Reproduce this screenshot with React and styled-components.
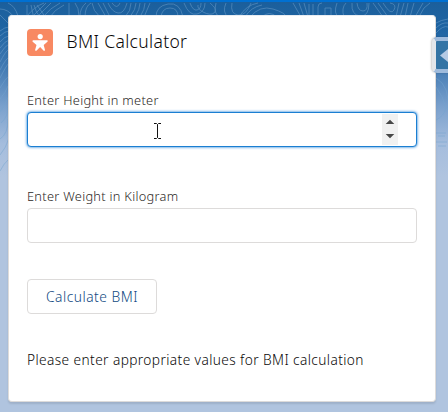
import React from "react";
import styled, { createGlobalStyle } from "styled-components";

const GlobalStyle = createGlobalStyle`
  *, *::before, *::after { box-sizing: border-box; }
  body {
    margin: 0;
    overflow: hidden;
    font-family: "Noto Sans", "Open Sans", sans-serif;
    font-weight: 300;
  }
`;

const Page = styled.main`
  position: relative;
  width: 448px;
  height: 412px;
  padding: 13px 12px 10px 8px;
  overflow: hidden;
  border-top: 2px solid #0070d2;
  background: linear-gradient(180deg, #1b5f9c 0, #2065a3 30px, #4079b2 64px, #7ba1cd 105px, #a5bddd 142px, #b0c4df 175px);
`;

const Contours = styled.svg`
  position: absolute;
  inset: 0;
  width: 448px;
  height: 190px;
  fill: none;
  stroke: #75a4cf;
  stroke-width: 0.8;
  opacity: 0.6;
`;

const Card = styled.article`
  position: relative;
  display: flex;
  flex-direction: column;
  align-items: flex-start;
  height: 387px;
  padding: 13px 19px 0 18px;
  background: #fff;
  border: 1px solid #dddbda;
  border-top-color: #e8edf3;
  border-radius: 4px;
  box-shadow: 0 2px 2px rgba(0, 0, 0, 0.1);
`;

const CardHeader = styled.header`
  display: flex;
  align-items: center;
  gap: 13.5px;
  height: 27px;
`;

const StandardIcon = styled.svg`
  display: block;
  width: 26px;
  height: 27px;
`;

const Title = styled.h2`
  margin: 0;
  padding-bottom: 2px;
  color: #080707;
  font-size: 17.5px;
  font-weight: 300;
  line-height: 25px;
  letter-spacing: 0.34px;
  white-space: nowrap;
`;

const Field = styled.div`
  width: 390px;
  margin-top: ${({ $gap }) => $gap}px;
`;

const Label = styled.label`
  display: block;
  height: 20px;
  color: #2b2826;
  font-size: 12.8px;
  line-height: 16px;
  letter-spacing: 0.29px;
  white-space: nowrap;
`;

const InputBox = styled.div`
  position: relative;
  display: flex;
  align-items: center;
  justify-content: flex-end;
  height: 35px;
  padding-right: 18px;
  background: #fff;
  border: 1px solid ${({ $focused }) => ($focused ? "#1b7fd2" : "#dddbda")};
  border-radius: 4px;
  box-shadow: ${({ $focused }) => ($focused ? "0 0 3px #0070d2" : "none")};
`;

const NumberInput = styled.input`
  flex: 1;
  min-width: 0;
  height: 31px;
  padding: 0 12px;
  border: 0;
  outline: 0;
  background: transparent;
  font: inherit;
  caret-color: transparent;
`;

const Spinner = styled.svg`
  display: block;
  width: 16px;
  height: 31px;
`;

const Pointer = styled.svg`
  position: absolute;
  left: 125px;
  top: 9px;
  width: 9px;
  height: 18px;
`;

const Button = styled.button`
  width: 130px;
  height: 35px;
  margin-top: 36px;
  padding: 0;
  color: #124a82;
  background: #fff;
  border: 1px solid #dddbda;
  border-radius: 4px;
  font-family: inherit;
  font-size: 13.8px;
  font-weight: 300;
  line-height: 32px;
  letter-spacing: 0.5px;
  white-space: nowrap;
`;

const Message = styled.p`
  margin: 36px 0 0;
  color: #080707;
  font-size: 13.7px;
  line-height: 20px;
  letter-spacing: 0.41px;
  white-space: nowrap;
`;

const PanelToggle = styled.button`
  position: absolute;
  top: 35px;
  right: -10px;
  width: 26px;
  height: 36px;
  padding: 0;
  border: 4px solid #9fbbdc;
  border-left-color: #e3e6ea;
  border-radius: 5px;
  background: #3474a5;
  box-shadow: -1px 0 2px rgba(0, 0, 0, 0.2);
`;

const ToggleArrow = styled.svg`
  display: block;
  width: 16px;
  height: 28px;
`;

export default function App() {
  return (
    <Page>
      <GlobalStyle />
      <Contours viewBox="0 2 448 190" aria-hidden="true">
        <path d="M0 9q8 0 14 8M0 15l10 10M8 3q7 3 10 13M27 5v12M31 5l3 14M34 5q2 8 6 12M37 5l9 13M27 16q7-9 17-13M32 17L46 3M37 17L51 3M43 17Q50 8 60 3M50 17q4-7 14-12M69 3v14M75 3q4 5 4 13M80 16q0-8 6-13M85 17q0-11 6-14M92 3q1 8 8 14M98 3l8 14M103 3l7 14M108 3q4 9 10 10t9-10M112 3q5 7 8 0M125 17q6-6 6-14M130 17q6-8 6-14M135 17q5-8 5-14M140 17q5-8 5-14M144 17l6-14M156 17q0-11 12-13t15 13M161 17q1-9 9-9t8 9M184 3q5 13 13 11t8-11M190 3q3 8 7 7t4-7M198 5c-2 5 12 12 16 8s-2-8-4-10M216 3q-3 11 4 14M226 3q-4 9 2 14M232 3q-2 11 6 12t13-12M239 17q7-12 19-14M245 17q6-10 17-12M250 17q10-12 23-8t13 8M262 17q7-7 15 0M293 3l8 14M299 3l5 14M304 3l4 14M309 17V4M313 17V4M318 17V7q0-4 4-4M325 17V8h6v9M337 3q-4 11 2 14M346 3q-5 5-2 14M352 3q-1 12 8 13t9-13M357 3q1 8 6 8t4-8M373 3l10 14M378 3l10 14M383 3q8 13 11 7t-4-7M396 17l3-14M400 17l4-14M405 17l3-14M410 17l4-14M415 17l8-14M420 15q3-8 10-12" />
        <path d="M0 31q5-4 9-4M0 36q5-5 9-5M0 42q5-6 9-6M0 48q5-7 9-8M0 54q5-8 9-10M0 62q5-10 9-13M0 70q5-10 9-13M0 78q6-12 9-15M0 88q5-9 9-12M0 99q6-7 8-13M0 112q6-8 9-17M1 123q7-6 7-16M0 139q8-5 8-20M0 155q6-7 9-17M0 171q4-8 9-12" />
        <path d="M436 23q5-3 12-4M436 28q6-6 12-5M436 33q7-8 12-6M436 78q7 4 10 12t2 20M436 87q7 9 10 21q-2 8-10 12M436 133h10M438 136h7M436 142h11M438 146h8" />
      </Contours>

      <Card>
        <CardHeader>
          <StandardIcon viewBox="0 0 26 27" aria-hidden="true">
            <rect width="26" height="27" rx="4" fill="#f88962" />
            <circle cx="13.2" cy="7.6" r="2.6" fill="#fff" />
            <path fill="#fff" d="M6 11.2h14.2q1.2.8.2 1.5l-3.7 3.2 1.3 5q-.1 1.2-1.3.8L13.1 18l-3.7 3.7q-1.1.4-1.3-.8l1.4-5-3.8-3.2q-.8-.8.3-1.5Z" />
          </StandardIcon>
          <Title>BMI Calculator</Title>
        </CardHeader>

        <Field $gap={36}>
          <Label htmlFor="height">Enter Height in meter</Label>
          <InputBox $focused>
            <NumberInput id="height" inputMode="decimal" />
            <Spinner viewBox="0 0 16 31" aria-hidden="true">
              <path fill="#f1f1f1" d="M0 0h16v31H0z" />
              <path fill="#484848" d="M3.7 10 8 5.7l4.3 4.3ZM3.7 20h8.6L8 24.3Z" />
            </Spinner>
            <Pointer viewBox="0 0 9 18" aria-hidden="true">
              <path d="M1 1.5h2.5l1 1 1-1H8M4.5 2.5v13M1 16.5h2.5l1-1 1 1H8" fill="none" stroke="#111" />
            </Pointer>
          </InputBox>
        </Field>

        <Field $gap={41}>
          <Label htmlFor="weight">Enter Weight in Kilogram</Label>
          <InputBox>
            <NumberInput id="weight" inputMode="decimal" />
          </InputBox>
        </Field>

        <Button type="button">Calculate BMI</Button>
        <Message>Please enter appropriate values for BMI calculation</Message>
      </Card>

      <PanelToggle type="button" aria-label="Open panel">
        <ToggleArrow viewBox="0 0 16 28" aria-hidden="true">
          <path fill="#b5cae4" d="M4 14.5 14 6.5v16Z" />
        </ToggleArrow>
      </PanelToggle>
    </Page>
  );
}
